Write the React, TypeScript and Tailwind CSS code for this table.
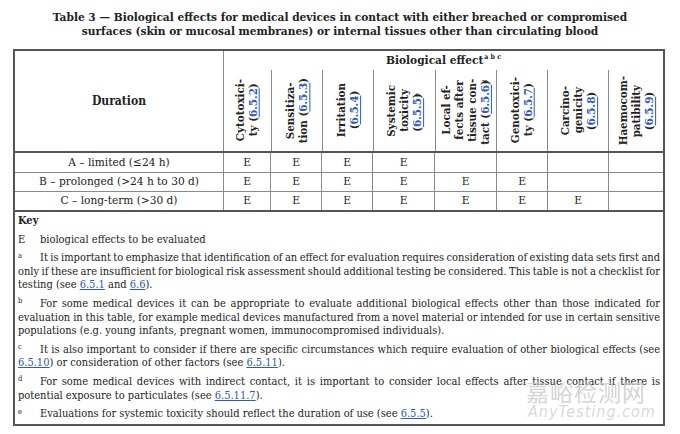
import React from "react";

const L = ({ children }: { children: React.ReactNode }) => (
  <span className="text-[#2d58c8] underline decoration-[#2d58c8]">{children}</span>
);

type Col = { w: string; lines: React.ReactNode[] };

const cols: Col[] = [
  { w: "w-[47px]", lines: ["Cytotoxici-", <>ty (<L>6.5.2</L>)</>] },
  { w: "w-[51px]", lines: ["Sensitiza-", <>tion (<L>6.5.3</L>)</>] },
  { w: "w-[51px]", lines: ["Irritation", <>(<L>6.5.4</L>)</>] },
  { w: "w-[62px]", lines: ["Systemic", "toxicity", <>(<L>6.5.5</L>)<sup className="text-[7px] font-normal">e</sup></>] },
  { w: "w-[62px]", lines: ["Local ef-", "fects after", "tissue con-", <>tact (<L>6.5.6</L>)<sup className="text-[7px] font-normal">d</sup></>] },
  { w: "w-[51px]", lines: ["Genotoxici-", <>ty (<L>6.5.7</L>)</>] },
  { w: "w-[61px]", lines: ["Carcino-", "genicity", <>(<L>6.5.8</L>)</>] },
  { w: "w-[55px]", lines: ["Haemocom-", "patibility", <>(<L>6.5.9</L>)</>] },
];

const rows: { label: string; vals: string[] }[] = [
  { label: "A – limited (≤24 h)", vals: ["E", "E", "E", "E", "", "", "", ""] },
  { label: "B – prolonged (>24 h to 30 d)", vals: ["E", "E", "E", "E", "E", "E", "", ""] },
  { label: "C – long-term (>30 d)", vals: ["E", "E", "E", "E", "E", "E", "E", ""] },
];

const Para = ({ mark, lines }: { mark: string; lines: React.ReactNode[] }) => (
  <div className="mt-[5.3px]">
    {lines.map((ln, i) => (
      <div
        key={i}
        className={
          "h-[13.5px] leading-[13.5px] " +
          (i < lines.length - 1
            ? "text-justify [text-align-last:justify] [word-spacing:-1.5px]"
            : "whitespace-nowrap")
        }
      >
        {i === 0 && (
          <span className="inline-block w-[22px] align-top [word-spacing:0px]">
            <sup className="text-[7.5px]">{mark}</sup>
          </span>
        )}
        {ln}
      </div>
    ))}
  </div>
);

export default function App() {
  return (
    <div
      className="relative w-[680px] h-[434px] bg-white text-[#222] overflow-hidden [font-stretch:condensed]"
      style={{ fontFamily: '"DejaVu Serif", "Liberation Serif", serif' }}
    >
      <div className="pt-[10px] text-center font-bold text-[11.8px] leading-[14px]">
        <div>Table 3 — Biological effects for medical devices in contact with either breached or compromised</div>
        <div>surfaces (skin or mucosal membranes) or internal tissues other than circulating blood</div>
      </div>

      <div className="mt-[11px] ml-[13px] w-[652px] border-2 border-[#555]">
        <div className="flex h-[102px] border-b-2 border-[#555]">
          <div className="w-[208px] flex items-center justify-center font-bold text-[12px]">Duration</div>
          <div className="w-[440px] border-l border-[#8a8a8a] flex flex-col">
            <div className="h-[19px] flex items-center justify-center font-bold text-[11.8px] leading-none">
              Biological effect<sup className="text-[7px] ml-[1px]">a b c</sup>
            </div>
            <div className="flex flex-1">
              {cols.map((c, i) => (
                <div
                  key={i}
                  className={c.w + " flex items-center justify-center " + (i > 0 ? "border-l border-[#8a8a8a]" : "")}
                >
                  <div className="[writing-mode:vertical-rl] rotate-180 text-center font-bold text-[11.5px] leading-[13px] whitespace-nowrap">
                    {c.lines.map((ln, j) => (
                      <div key={j}>{ln}</div>
                    ))}
                  </div>
                </div>
              ))}
            </div>
          </div>
        </div>

        {rows.map((r, ri) => (
          <div key={ri} className={"flex h-[19px] text-[11.8px] " + (ri > 0 ? "border-t border-[#8a8a8a]" : "")}>
            <div className="w-[208px] flex items-center justify-center">{r.label}</div>
            {r.vals.map((v, vi) => (
              <div key={vi} className={cols[vi].w + " flex items-center justify-center border-l border-[#8a8a8a]"}>
                {v}
              </div>
            ))}
          </div>
        ))}

        <div className="border-t-2 border-[#555] px-[3px] pt-[2px] pb-[3px] text-[11px]">
          <div className="h-[13.5px] leading-[13.5px] font-bold">Key</div>
          <div className="mt-[5px] h-[13.5px] leading-[13.5px]">
            <span className="inline-block w-[22px]">E</span>biological effects to be evaluated
          </div>
          <Para
            mark="a"
            lines={[
              "It is important to emphasize that identification of an effect for evaluation requires consideration of existing data sets first and",
              "only if these are insufficient for biological risk assessment should additional testing be considered. This table is not a checklist for",
              <>testing (see <L>6.5.1</L> and <L>6.6</L>).</>,
            ]}
          />
          <Para
            mark="b"
            lines={[
              "For some medical devices it can be appropriate to evaluate additional biological effects other than those indicated for",
              "evaluation in this table, for example medical devices manufactured from a novel material or intended for use in certain sensitive",
              "populations (e.g. young infants, pregnant women, immunocompromised individuals).",
            ]}
          />
          <Para
            mark="c"
            lines={[
              "It is also important to consider if there are specific circumstances which require evaluation of other biological effects (see",
              <><L>6.5.10</L>) or consideration of other factors (see <L>6.5.11</L>).</>,
            ]}
          />
          <Para
            mark="d"
            lines={[
              "For some medical devices with indirect contact, it is important to consider local effects after tissue contact if there is",
              <>potential exposure to particulates (see <L>6.5.11.7</L>).</>,
            ]}
          />
          <Para mark="e" lines={[<>Evaluations for systemic toxicity should reflect the duration of use (see <L>6.5.5</L>).</>]} />
        </div>
      </div>

      <div
        className="absolute left-[526px] top-[380px] text-[23px] leading-none text-[#c8c8c8]/80 tracking-[1px]"
        style={{ fontFamily: '"Noto Sans CJK SC", sans-serif' }}
      >
        嘉峪检测网
      </div>
      <div
        className="absolute left-[528px] top-[404px] text-[16px] leading-none italic text-[#cfcfcf]/80 tracking-[1px]"
        style={{ fontFamily: '"DejaVu Sans", sans-serif' }}
      >
        AnyTesting.com
      </div>
    </div>
  );
}
